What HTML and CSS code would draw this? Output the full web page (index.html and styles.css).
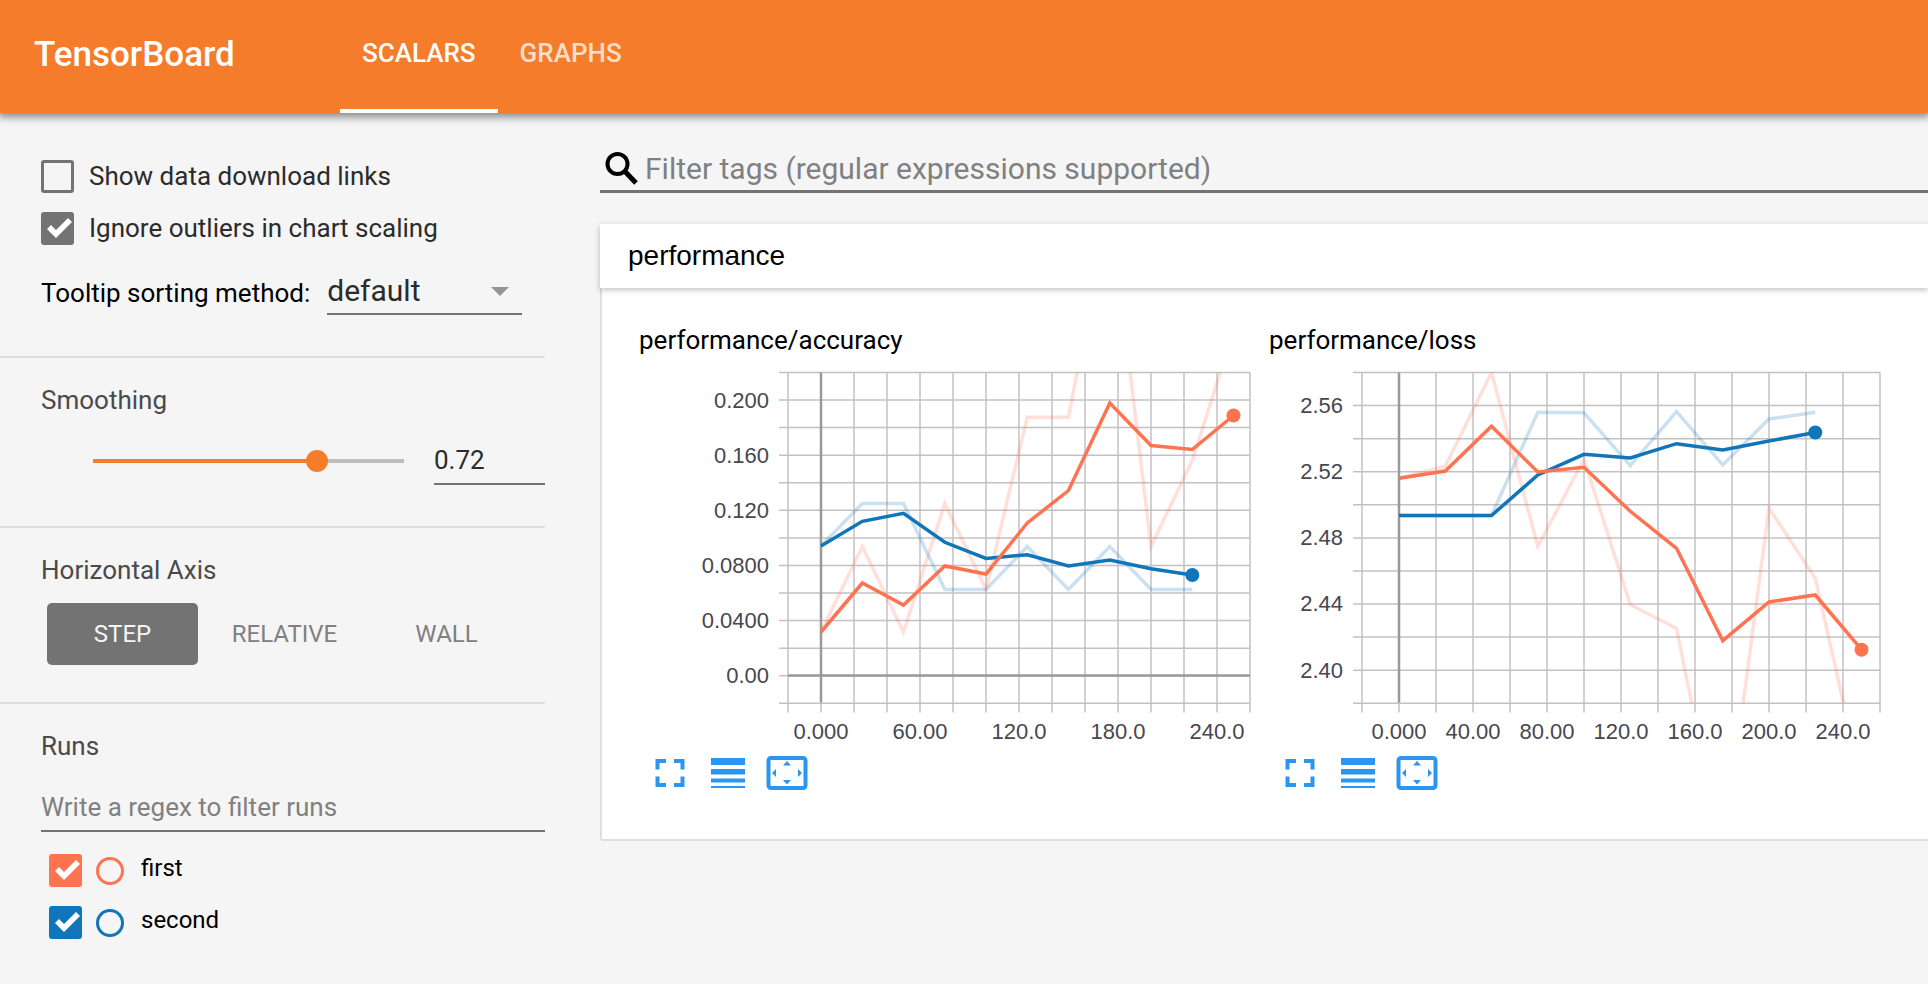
FILE: index.html
```html
<!DOCTYPE html>
<html lang="en">
<head>
<meta charset="utf-8">
<title>TensorBoard</title>
<link rel="stylesheet" href="styles.css">
</head>
<body>
<header class="toolbar">
  <h1 class="brand">TensorBoard</h1>
  <nav class="tabs">
    <a class="tab tab-active" href="#scalars">SCALARS</a>
    <a class="tab" href="#graphs">GRAPHS</a>
  </nav>
</header>
<div class="layout">
  <aside class="sidebar">
    <section class="section section-options">
      <label class="option"><input class="check" type="checkbox"><span class="option-text">Show data download links</span></label>
      <label class="option"><input class="check" type="checkbox" checked><span class="option-text">Ignore outliers in chart scaling</span></label>
      <div class="sorting">
        <label class="sorting-label" for="sorting">Tooltip sorting method:</label>
        <span class="select-wrap">
          <select class="select" id="sorting"><option>default</option><option>descending</option><option>ascending</option><option>nearest</option></select>
        </span>
      </div>
    </section>
    <section class="section">
      <h2 class="section-title" id="smoothing-title">Smoothing</h2>
      <div class="smoothing">
        <input class="slider" type="range" min="0" max="1" step="0.01" value="0.72" aria-labelledby="smoothing-title">
        <input class="field number" type="text" value="0.72" aria-labelledby="smoothing-title">
      </div>
    </section>
    <section class="section section-axis">
      <h2 class="section-title">Horizontal Axis</h2>
      <div class="axis-buttons">
        <button class="axis-button axis-active" type="button">STEP</button>
        <button class="axis-button" type="button">RELATIVE</button>
        <button class="axis-button" type="button">WALL</button>
      </div>
    </section>
    <section class="section section-runs">
      <h2 class="section-title">Runs</h2>
      <input class="field regex" type="text" placeholder="Write a regex to filter runs" aria-label="Write a regex to filter runs">
      <div class="runs">
        <div class="run run-first">
          <input class="check check-run" type="checkbox" id="run-first" checked>
          <input class="radio" type="radio" name="only" aria-label="Only first">
          <label class="run-name" for="run-first">first</label>
        </div>
        <div class="run run-second">
          <input class="check check-run" type="checkbox" id="run-second" checked>
          <input class="radio" type="radio" name="only" aria-label="Only second">
          <label class="run-name" for="run-second">second</label>
        </div>
      </div>
    </section>
  </aside>
  <main class="content">
    <label class="search">
      <svg class="search-icon" viewBox="0 0 33 33" width="33" height="33" aria-hidden="true"><circle cx="12.500" cy="12" r="10" fill="none" stroke="#000" stroke-width="4"/><path d="M19.500 19 L31 31" stroke="#000" stroke-width="5"/></svg>
      <input class="search-input" type="text" placeholder="Filter tags (regular expressions supported)" aria-label="Filter tags">
    </label>
    <section class="category">
      <h2 class="category-title">performance</h2>
      <div class="cards">
        <article class="card">
          <h3 class="card-title">performance/accuracy</h3>
          <svg class="chart" viewBox="0 0 620 384" width="620" height="384" role="img" aria-label="performance/accuracy">
            <defs><clipPath id="clip-accuracy"><rect width="462" height="331"/></clipPath></defs>
            <g transform="translate(149 7.5)">
              <path class="grid" d="M-9 0H462M-9 27.6H462M-9 55.1H462M-9 82.7H462M-9 110.3H462M-9 137.8H462M-9 165.4H462M-9 193H462M-9 220.5H462M-9 248.1H462M-9 275.7H462M-9 303.2H462M-9 330.8H462M0 0V340M33 0V340M66 0V340M99 0V340M132 0V340M165 0V340M198 0V340M231 0V340M264 0V340M297 0V340M330 0V340M363 0V340M396 0V340M429 0V340M462 0V340"/>
              <path class="zero" d="M33 0V330M0 303H462"/>
              <g clip-path="url(#clip-accuracy)">
                <polyline class="line second raw" points="33,173.5 74.3,131 115.5,131 156.8,217 198,217 239.3,174 280.5,217 321.8,174 363,217 404.3,217"/>
                <polyline class="line first raw" points="33,259.5 74.3,174 115.5,259.5 156.8,131 198,217 239.3,44.7 280.5,44.7 321.8,-170 363,174 404.3,87.8 445.5,-41"/>
                <polyline class="line second" points="33,173.5 74.3,148.8 115.5,140.8 156.8,169.8 198,186 239.3,182.2 280.5,193.5 321.8,187.5 363,196.2 404.3,202.5"/>
                <polyline class="line first" points="33,259.5 74.3,210.5 115.5,232.5 156.8,193.5 198,201.5 239.3,150.5 280.5,118 321.8,30.5 363,73 404.3,77 445.5,43"/>
              </g>
              <circle class="dot-second" cx="404.3" cy="202.5" r="7"/>
              <circle class="dot-first" cx="445.5" cy="43" r="7"/>
              <g class="tick tick-y">
                <text x="-19" y="35">0.200</text><text x="-19" y="90">0.160</text><text x="-19" y="145">0.120</text><text x="-19" y="200">0.0800</text><text x="-19" y="255">0.0400</text><text x="-19" y="310">0.00</text>
              </g>
              <g class="tick tick-x">
                <text x="33" y="366">0.000</text><text x="132" y="366">60.00</text><text x="231" y="366">120.0</text><text x="330" y="366">180.0</text><text x="429" y="366">240.0</text>
              </g>
            </g>
          </svg>
          <div class="actions">
            <button class="action" type="button" aria-label="Toggle fullscreen"><svg viewBox="0 0 42 34" width="42" height="34"><path d="M9.500 13.500V5H18M26 5h8.500v8.500M34.500 20.500V29H26M18 29H9.500v-8.500" fill="none" stroke="#2b95f0" stroke-width="4"/></svg></button>
            <button class="action" type="button" aria-label="Toggle log scale"><svg viewBox="0 0 42 34" width="42" height="34"><path d="M4 2h34v7H4zM4 13h34v5.500H4zM4 22.500h34v4H4zM4 30h34v2H4z" fill="#2b95f0"/></svg></button>
            <button class="action" type="button" aria-label="Fit domain to data"><svg viewBox="0 0 42 34" width="42" height="34"><rect x="2.500" y="2" width="37" height="30" rx="2.500" fill="none" stroke="#2b95f0" stroke-width="4"/><path d="M21 5l4 4.500h-8zM21 28.500l4-4.500h-8zM6 17l4-4v8zM36 17l-4-4v8z" fill="#2b95f0"/></svg></button>
          </div>
        </article>
        <article class="card">
          <h3 class="card-title">performance/loss</h3>
          <svg class="chart" viewBox="0 0 620 384" width="620" height="384" role="img" aria-label="performance/loss">
            <defs><clipPath id="clip-loss"><rect width="518" height="331"/></clipPath></defs>
            <g transform="translate(93 7.5)">
              <path class="grid" d="M-9 0H518M-9 33.1H518M-9 66.2H518M-9 99.3H518M-9 132.3H518M-9 165.4H518M-9 198.5H518M-9 231.6H518M-9 264.6H518M-9 297.7H518M-9 330.8H518M0 0V340M37 0V340M74 0V340M111 0V340M148 0V340M185 0V340M222 0V340M259 0V340M296 0V340M333 0V340M370 0V340M407 0V340M444 0V340M481 0V340M518 0V340"/>
              <path class="zero" d="M37 0V330"/>
              <g clip-path="url(#clip-loss)">
                <polyline class="line second raw" points="37,143 83.300,143 129.500,143 175.800,39.800 222,40.300 268.300,93.200 314.500,39.200 360.800,92.500 407,46.500 453.300,39.800"/>
                <polyline class="line first raw" points="37,105.800 83.300,93.800 129.500,0 175.800,174 222,86.500 268.300,232.200 314.500,255.800 360.800,484 407,135.500 453.300,205.800 499.500,410"/>
                <polyline class="line second" points="37,143 83.300,143 129.500,143 175.800,102.500 222,81.800 268.300,85.500 314.500,71.200 360.800,77.500 407,68.500 453.300,60"/>
                <polyline class="line first" points="37,105.800 83.300,98.500 129.500,53.800 175.800,99.500 222,94.800 268.300,138.800 314.500,175.800 360.800,268.200 407,229.500 453.300,222.500 499.500,277.200"/>
              </g>
              <circle class="dot-second" cx="453.300" cy="60" r="7"/>
              <circle class="dot-first" cx="499.500" cy="277.200" r="7"/>
              <g class="tick tick-y">
                <text x="-19" y="40">2.56</text><text x="-19" y="106">2.52</text><text x="-19" y="172">2.48</text><text x="-19" y="238">2.44</text><text x="-19" y="305">2.40</text>
              </g>
              <g class="tick tick-x">
                <text x="37" y="366">0.000</text><text x="111" y="366">40.00</text><text x="185" y="366">80.00</text><text x="259" y="366">120.0</text><text x="333" y="366">160.0</text><text x="407" y="366">200.0</text><text x="481" y="366">240.0</text>
              </g>
            </g>
          </svg>
          <div class="actions">
            <button class="action" type="button" aria-label="Toggle fullscreen"><svg viewBox="0 0 42 34" width="42" height="34"><path d="M9.500 13.500V5H18M26 5h8.500v8.500M34.500 20.500V29H26M18 29H9.500v-8.500" fill="none" stroke="#2b95f0" stroke-width="4"/></svg></button>
            <button class="action" type="button" aria-label="Toggle log scale"><svg viewBox="0 0 42 34" width="42" height="34"><path d="M4 2h34v7H4zM4 13h34v5.500H4zM4 22.500h34v4H4zM4 30h34v2H4z" fill="#2b95f0"/></svg></button>
            <button class="action" type="button" aria-label="Fit domain to data"><svg viewBox="0 0 42 34" width="42" height="34"><rect x="2.500" y="2" width="37" height="30" rx="2.500" fill="none" stroke="#2b95f0" stroke-width="4"/><path d="M21 5l4 4.500h-8zM21 28.500l4-4.500h-8zM6 17l4-4v8zM36 17l-4-4v8z" fill="#2b95f0"/></svg></button>
          </div>
        </article>
      </div>
    </section>
  </main>
</div>
</body>
</html>
```
FILE: styles.css
```css
* { box-sizing: border-box; }

body {
  margin: 0;
  background: #f5f5f5;
  color: #000;
  font-family: Roboto, "Liberation Sans", sans-serif;
  font-size: 26px;
  line-height: 30px;
  overflow-x: hidden;
}

h1, h2, h3 { margin: 0; font-weight: 400; }
input, select, button { margin: 0; font-family: inherit; color: inherit; }

.toolbar {
  position: relative;
  display: flex;
  align-items: stretch;
  height: 113px;
  padding-left: 34px;
  background: #f57c2a;
  color: #fff;
  box-shadow: 0 2px 8px 2px rgba(0, 0, 0, 0.45);
}
.brand {
  width: 306px;
  font-size: 35px;
  font-weight: 500;
  line-height: 110px;
}
.tabs { display: flex; }
.tab {
  padding: 0 22px;
  border-bottom: 4px solid transparent;
  color: rgba(255, 255, 255, 0.75);
  font-size: 26px;
  font-weight: 500;
  line-height: 107px;
  text-decoration: none;
}
.tab-active { border-color: #fff; color: #fff; }

.layout { display: flex; gap: 55px; }

.sidebar { flex: none; width: 545px; }
.section {
  padding: 27px 0 41px 41px;
  border-bottom: 2px solid #dedede;
}
.section-options { padding-top: 47px; }
.section-axis { padding-bottom: 37px; }
.section-runs { padding-bottom: 0; border-bottom: 0; }
.section-title { color: #4a4a4a; font-size: 26px; line-height: 30px; }

.option {
  display: flex;
  align-items: center;
  gap: 15px;
  height: 33px;
  margin-bottom: 19px;
  color: #2b2b2b;
}
.option-text { padding-bottom: 2px; }
.check {
  flex: none;
  appearance: none;
  width: 33px;
  height: 33px;
  border: 3px solid #737373;
  border-radius: 3px;
}
.check:checked { border: 0; background: #737373; }
.check:checked::after {
  content: "";
  display: block;
  width: 33px;
  height: 33px;
  background: #fff;
  clip-path: polygon(6px 17px, 10px 13px, 15px 18px, 27px 6px, 31px 10px, 15px 26px);
}

.sorting { display: flex; align-items: center; gap: 17px; margin-top: 23px; }
.sorting-label { padding-top: 2px; white-space: nowrap; }
.select-wrap { position: relative; width: 195px; }
.select-wrap::after {
  content: "";
  position: absolute;
  top: 19px;
  right: 13px;
  border: 9px solid transparent;
  border-top-color: #959595;
  border-bottom: 0;
  pointer-events: none;
}
.select {
  display: block;
  appearance: none;
  width: 100%;
  height: 47px;
  padding: 0;
  border: 0;
  border-bottom: 2px solid #737373;
  border-radius: 0;
  background: transparent;
  color: #2b2b2b;
  font-size: 30px;
}

.field {
  height: 48px;
  padding: 0;
  border: 0;
  border-bottom: 2px solid #737373;
  background: transparent;
  color: #2b2b2b;
  font-size: 26px;
  outline: 0;
}
.field::placeholder, .search-input::placeholder { color: #808080; opacity: 1; }

.smoothing { display: flex; align-items: center; gap: 19px; margin: 22px 0 0 41px; }
.slider {
  flex: 1;
  min-width: 0;
  appearance: none;
  height: 22px;
  background: linear-gradient(to right, transparent 11px, #f57c2a 11px, #f57c2a 72%, #bdbdbd 72%, #bdbdbd calc(100% - 11px), transparent calc(100% - 11px)) center / 100% 4px no-repeat;
}
.slider::-webkit-slider-thumb {
  appearance: none;
  width: 22px;
  height: 22px;
  border-radius: 50%;
  background: #f57c2a;
}
.number { width: 111px; }

.axis-buttons { display: flex; margin: 18px 0 0 6px; }
.axis-button {
  width: 151px;
  height: 62px;
  margin-right: 11px;
  padding: 0;
  border: 0;
  border-radius: 5px;
  background: transparent;
  color: #808080;
  font-size: 24px;
}
.axis-active { background: #737373; color: #f5f5f5; }

.regex { display: block; width: 100%; margin-top: 23px; }
.runs { display: grid; gap: 19px; padding: 22px 0 0 8px; }
.run { display: flex; align-items: center; height: 33px; }
.run-first { --run: #ff7350; }
.run-second { --run: #1176b9; }
.check-run:checked { background: var(--run); }
.radio {
  appearance: none;
  width: 28px;
  height: 28px;
  margin: 0 17px 0 14px;
  border: 3px solid var(--run);
  border-radius: 50%;
}
.run-name { padding-bottom: 5px; font-size: 24px; }

.content { flex: 1; min-width: 0; padding-top: 33px; }
.search {
  display: flex;
  align-items: center;
  gap: 7px;
  height: 47px;
  padding-left: 5px;
  border-bottom: 3px solid #737373;
}
.search-icon { flex: none; }
.search-input {
  flex: 1;
  min-width: 0;
  height: 44px;
  padding: 0;
  border: 0;
  background: transparent;
  font-size: 30px;
  outline: 0;
}

.category { margin-top: 31px; }
.category-title {
  position: relative;
  padding-left: 28px;
  background: #fff;
  box-shadow: 0 2px 6px rgba(0, 0, 0, 0.25);
  font-family: "Liberation Sans", Arial, sans-serif;
  font-size: 28px;
  line-height: 64px;
}
.cards {
  display: flex;
  padding: 37px 0 49px 37px;
  border-left: 2px solid #dedede;
  border-bottom: 2px solid #dedede;
  border-bottom-left-radius: 3px;
  background: #fff;
}
.card { flex: none; width: 630px; }
.card-title { margin-bottom: 10px; font-size: 26px; line-height: 30px; }
.chart { display: block; }
.actions { display: flex; gap: 17px; margin: 7px 0 0 9px; }
.action { width: 42px; height: 34px; padding: 0; border: 0; background: transparent; }
.action svg { display: block; }

.grid { fill: none; stroke: #6f6a72; stroke-opacity: 0.42; stroke-width: 1.5; }
.zero { fill: none; stroke: #999; stroke-width: 2.5; }
.line { fill: none; stroke-width: 3.5; }
.first { stroke: #ff7350; }
.second { stroke: #1176b9; }
.raw { stroke-opacity: 0.22; }
.dot-first { fill: #ff7350; }
.dot-second { fill: #1176b9; }
.tick { fill: #474750; font-family: "Liberation Sans", Arial, sans-serif; font-size: 22px; }
.tick-y { text-anchor: end; }
.tick-x { text-anchor: middle; }
```
